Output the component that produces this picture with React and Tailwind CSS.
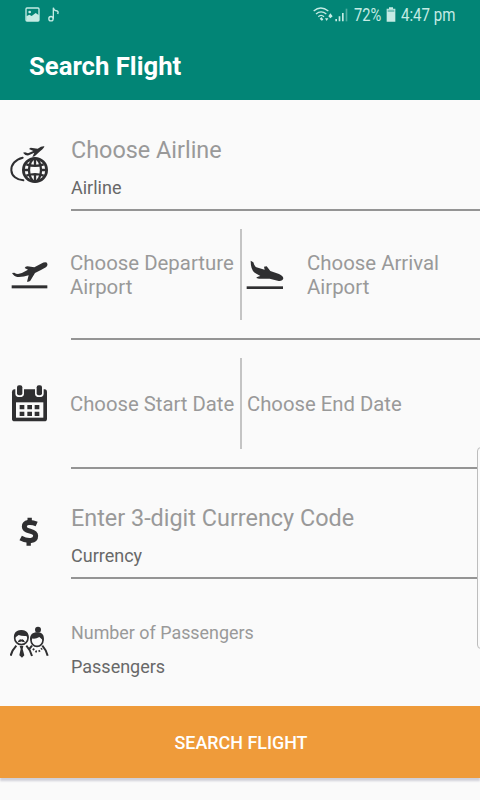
const ink = '#2f2f31';

function AirlineIcon() {
  return (
    <svg className="h-10 w-10" viewBox="0 0 120 120" fill="none" stroke={ink}>
      <path d="M38 41C16 46 3 62 4 79C5 96 20 108 40 109" strokeWidth="6" strokeLinecap="round" />
      <circle cx="75" cy="78" r="35" strokeWidth="8" />
      <ellipse cx="75" cy="78" rx="18" ry="34" strokeWidth="7" />
      <path d="M75 42V64M75 92V114M40 78H57M93 78H110M49 61Q75 70 101 61M49 95Q75 86 101 95" strokeWidth="7" />
      <path d="M39 26L45 25L54 28L70 21L57 15L62 11L83 14Q95 6 103 7Q104 11 91 21L74 37L67 39L73 26L56 34Q46 36 39 26Z" fill={ink} stroke="none" />
    </svg>
  );
}

function DepartureIcon() {
  return (
    <svg className="h-8 w-10" viewBox="0 0 120 96" fill={ink}>
      <path d="M6 42L13 41Q18 45 24 45Q38 42 54 32L44 27Q46 22 52 22L73 25L93 14Q105 8 111 11Q115 17 109 24Q92 34 75 42L61 65Q57 69 51 68L56 49Q39 55 22 54Q12 53 6 42Z" />
      <rect x="5" y="79" width="107" height="9" />
    </svg>
  );
}

function ArrivalIcon() {
  return (
    <svg className="h-8 w-10" viewBox="0 0 120 96" fill={ink}>
      <path d="M17 5L25 10Q28 22 34 25L59 32L57 23L65 22L76 36L102 45Q114 50 115 58Q113 67 101 66L74 59Q55 60 42 59L34 57Q34 54 46 51L29 41Q17 32 17 5Z" />
      <rect x="5" y="82" width="109" height="8" />
    </svg>
  );
}

function CalendarIcon() {
  return (
    <svg className="h-10 w-10" viewBox="0 0 120 120" fill={ink}>
      <path d="M14 16H104Q111 16 111 25V104Q111 112 103 112H14Q6 112 6 104V25Q6 16 14 16Z" />
      <rect x="18" y="55" width="82" height="46" fill="#fafafa" />
      <path d="M16 12H42V29Q42 39 29 39Q16 39 16 29ZM75 12H101V29Q101 39 88 39Q75 39 75 29Z" fill="#fafafa" />
      <rect x="21" y="4" width="16" height="30" rx="6" />
      <rect x="80" y="4" width="16" height="30" rx="6" />
      <path d="M29 63H43V76H29ZM52 63H66V76H52ZM74 63H88V76H74ZM29 83H43V96H29ZM52 83H66V96H52ZM74 83H88V96H74Z" />
    </svg>
  );
}

function DollarIcon() {
  return (
    <svg className="h-8 w-10" viewBox="0 0 120 96" fill="none" stroke={ink}>
      <path d="M80 24C62 16 43 18 43 32C43 50 77 41 77 59C77 76 54 78 32 66" strokeWidth="15" />
      <path d="M59 5V20M56 72V89" strokeWidth="13" />
    </svg>
  );
}

function PassengersIcon() {
  return (
    <svg className="h-[34px] w-10" viewBox="0 0 120 102" fill="none" stroke={ink}>
      <circle cx="34" cy="36" r="20" strokeWidth="5" />
      <path d="M12 37C10 20 20 12 34 12C48 12 58 20 56 37L49 30Q35 31 26 27L18 33Z" fill={ink} stroke="none" />
      <path d="M25 47Q28 39 34 42Q40 39 43 47L34 45Z" fill={ink} strokeWidth="3" />
      <path d="M19 59Q6 73 2 89M49 59Q61 72 66 90" strokeWidth="6" />
      <path d="M29 60H40L38 69L43 88L36 95L28 88L32 69Z" fill={ink} stroke="none" />
      <circle cx="81" cy="43" r="18" strokeWidth="5" />
      <circle cx="84" cy="11" r="9" fill={ink} stroke="none" />
      <path d="M60 44C59 25 68 19 82 19C97 19 104 28 101 44L88 33Q76 40 65 37Z" fill={ink} stroke="none" />
      <path d="M66 59L57 70M97 59Q108 71 113 89" strokeWidth="6" />
      <path d="M69 68Q82 86 96 67" strokeWidth="6" strokeDasharray="5 5" />
    </svg>
  );
}

function StatusBar() {
  return (
    <div className="flex h-[29px] items-center justify-between pl-[25px] pr-6 text-[#c5ebe4]">
      <div className="flex items-center gap-2">
        <svg className="h-[15px] w-[15px]" viewBox="0 0 45 45">
          <rect x="3" y="3" width="39" height="39" rx="3" fill="none" stroke="currentColor" strokeWidth="4" />
          <circle cx="14" cy="15" r="4" fill="currentColor" />
          <path d="M4 28L13 23L20 27L32 18L42 25V42H4Z" fill="currentColor" />
        </svg>
        <svg className="h-[15px] w-3" viewBox="0 0 36 45" fill="none" stroke="currentColor" strokeWidth="4">
          <circle cx="9" cy="35" r="6.5" />
          <path d="M16 35V2Q17 11 28 12Q32 14 29 21" />
        </svg>
      </div>
      <div className="flex items-center">
        <svg className="mr-[5px] h-[15px] w-9" viewBox="0 0 108 45" fill="none" stroke="currentColor" strokeWidth="4">
          <path d="M2 12Q23 -6 46 12M9 21Q24 8 40 21M16 29Q24 21 33 29" />
          <path d="M20 35L26 30L31 38L26 41ZM36 34H46L41 42ZM46 28L52 19L59 28L52 34Z" fill="currentColor" stroke="none" />
          <path d="M67 36H72V43H67ZM77 28H82V43H77ZM87 18H92V43H87Z" fill="currentColor" stroke="none" />
          <path d="M98 5H103V43H98Z" fill="currentColor" stroke="none" opacity="0.4" />
        </svg>
        <span className="w-[28px] origin-left scale-x-[0.84] whitespace-nowrap text-[17.5px] leading-5">72%</span>
        <svg className="ml-1 mr-[5px] h-[15px] w-[10px]" viewBox="0 0 30 45" fill="currentColor">
          <path d="M9 1H21V5H28V44H2V5H9Z" />
          <path d="M5 8H25V15H5Z" fill="#028576" opacity="0.4" />
        </svg>
        <span className="w-[55px] origin-left scale-x-[0.86] whitespace-nowrap text-[17.5px] leading-5">4:47 pm</span>
      </div>
    </div>
  );
}

function Field({ icon, label, value, small, className }) {
  return (
    <div className={`flex ${className}`}>
      <div className="flex w-[71px] shrink-0 items-center pl-[10px]">{icon}</div>
      <div className="flex flex-1 flex-col justify-end">
        <label className={`text-[#999] ${small ? 'mb-[10px] text-[17.9px] leading-6' : 'mb-[14px] text-[23.4px] leading-6'}`}>
          {label}
        </label>
        <span className="text-[18px] leading-6 text-[#686868]">{value}</span>
      </div>
    </div>
  );
}

export default function App() {
  return (
    <div className="relative flex h-[800px] w-[480px] flex-col overflow-hidden bg-[#fafafa] font-['Roboto',sans-serif]">
      {/* Header */}
      <header className="h-[100px] shrink-0 bg-[#028576]">
        <StatusBar />
        <h1 className="pl-[29px] pt-[21px] text-[25.7px] font-bold leading-8 text-white">Search Flight</h1>
      </header>

      {/* Airline */}
      <Field className="h-[109px] pb-[9px] pt-[27px]" icon={<AirlineIcon />} label="Choose Airline" value="Airline" />
      <div className="ml-[71px] h-[2px] bg-[#949494]" />

      {/* Airports */}
      <div className="flex h-[127px] items-center text-[20.4px] leading-6 text-[#999]">
        <div className="flex w-[70px] shrink-0 pl-[10px]">
          <DepartureIcon />
        </div>
        <div className="w-[170px] shrink-0">Choose Departure<br />Airport</div>
        <div className="h-[91px] w-[2px] shrink-0 bg-[#c4c4c4]" />
        <div className="flex w-[65px] shrink-0 pl-[3px]">
          <ArrivalIcon />
        </div>
        <div className="flex-1">Choose Arrival<br />Airport</div>
      </div>
      <div className="ml-[71px] h-[2px] bg-[#949494]" />

      {/* Dates */}
      <div className="flex h-[127px] items-center text-[20.3px] leading-6 text-[#999]">
        <div className="flex w-[70px] shrink-0 pl-[10px]">
          <CalendarIcon />
        </div>
        <div className="w-[170px] shrink-0 whitespace-nowrap">Choose Start Date</div>
        <div className="h-[91px] w-[2px] shrink-0 bg-[#c4c4c4]" />
        <div className="pl-[5px]">Choose End Date</div>
      </div>
      <div className="ml-[71px] h-[2px] bg-[#949494]" />

      {/* Currency */}
      <Field className="h-[108px] pb-[9px] pt-[26px]" icon={<DollarIcon />} label="Enter 3-digit Currency Code" value="Currency" />
      <div className="ml-[71px] h-[2px] bg-[#949494]" />

      {/* Passengers */}
      <Field className="h-[127px] pb-[27px] pt-[27px]" icon={<PassengersIcon />} label="Number of Passengers" value="Passengers" small />

      <button className="h-[72px] w-full shrink-0 bg-[#ef9b3a] pl-[2px] pt-[3px] text-[17.9px] font-medium text-white shadow-[0_3px_2px_#cfcfd8]">
        SEARCH FLIGHT
      </button>

      {/* Edge panel handle */}
      <div className="absolute left-[477px] top-[447px] h-[202px] w-2 rounded-[5px] border border-[#bdbdbd] bg-[#fafafa]" />
    </div>
  );
}
